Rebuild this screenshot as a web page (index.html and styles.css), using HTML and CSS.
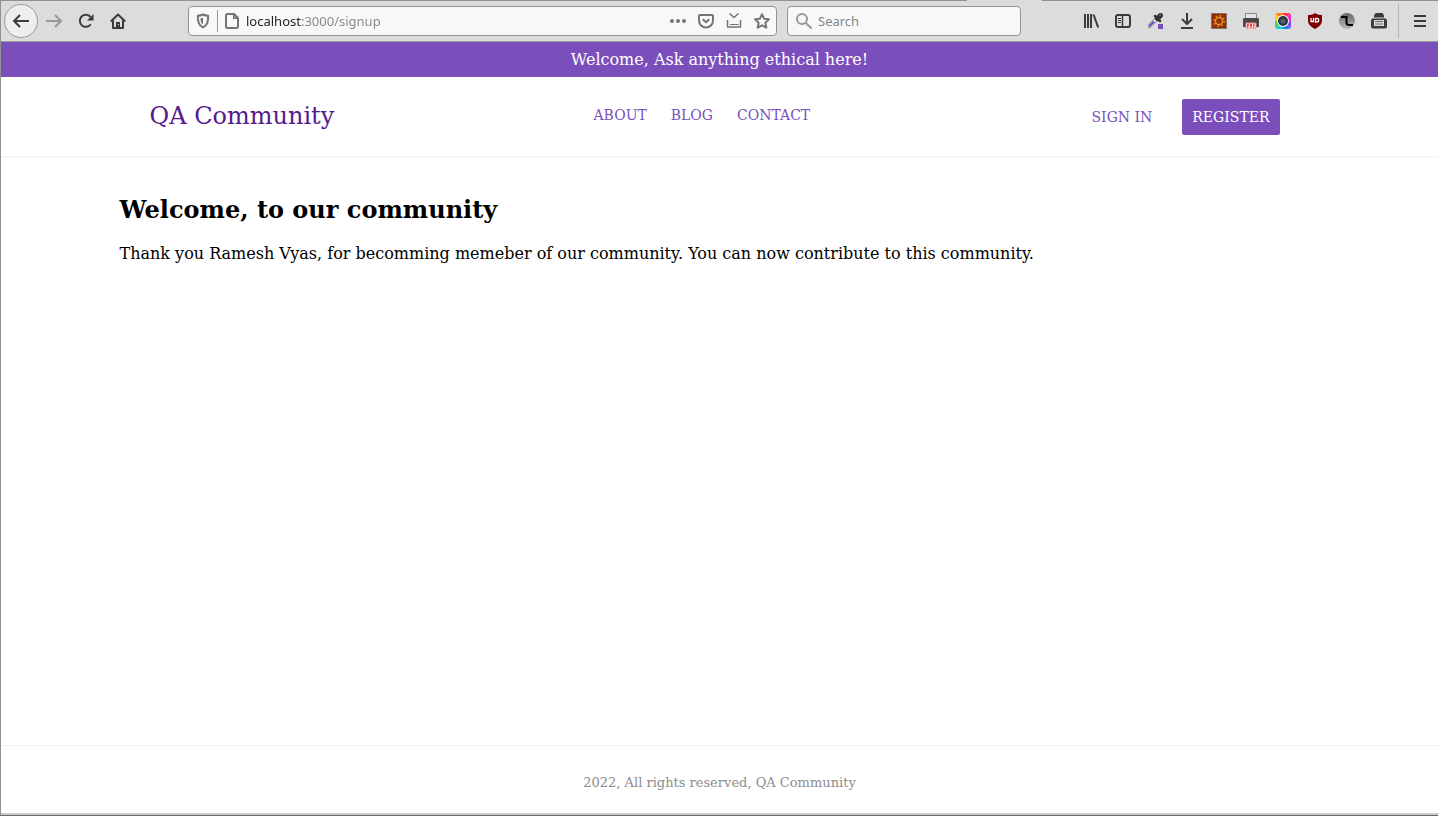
FILE: index.html
```html
<!DOCTYPE html>
<html lang="en">
<head>
<meta charset="utf-8">
<meta name="viewport" content="width=device-width, initial-scale=1">
<title>QA Community</title>
<link rel="stylesheet" href="styles.css">
</head>
<body class="window">
<div class="toolbar">
  <div class="group">
    <button class="back" type="button" aria-label="Back"><svg viewBox="0 0 16 16"><path d="M16 8H1.500M7 2 1 8l6 6" class="line thick"/></svg></button>
    <button class="tool faded" type="button" aria-label="Forward"><svg viewBox="0 0 16 16"><path d="M0 8h14.500M9 2l6 6-6 6" class="line thick"/></svg></button>
    <button class="tool" type="button" aria-label="Reload"><svg viewBox="0 0 16 16"><path d="M12.800 11.200A6 6 0 1 1 12.500 4" class="line thick"/><path d="M15.500 1v6.500H9z"/></svg></button>
    <button class="tool" type="button" aria-label="Home"><svg viewBox="0 0 16 16"><path d="M.8 8.500 8 1.500l7.200 7M3 7.500V15h10V7.500" class="line thick"/><path d="M6 15V9h4v6z"/><path d="M8 11h1v1H8z" fill="#ddd"/></svg></button>
  </div>
  <div class="field address">
    <svg class="shield" viewBox="0 0 16 16"><path d="M8 1.500c2 1 3.500 1.200 5.200 1.300 0 5.700-.7 9.200-5.200 11.700C3.500 12 2.800 8.500 2.800 2.800 4.500 2.700 6 2.500 8 1.500z" class="line thick"/><path d="M8 4.500v7C6 10 5.500 8 5.500 5.200 6.500 5.200 7.300 5 8 4.500z"/></svg>
    <span class="divider"></span>
    <svg class="page-icon" viewBox="0 0 16 16"><path d="M3.500 1H10l4 4v8.500a1.500 1.500 0 0 1-1.500 1.500h-9A1.500 1.500 0 0 1 2 13.500v-11A1.500 1.500 0 0 1 3.500 1z" class="line thick"/><path d="M9 1v5h5z"/><path d="M10.500 3.500v1.200h1.200z" fill="#f8f8f8"/></svg>
    <input class="url" type="text" aria-label="Address" value="localhost:3000/signup">
    <button class="mini" type="button" aria-label="Page actions"><svg viewBox="0 0 16 16"><circle cx="2" cy="8" r="2"/><circle cx="8" cy="8" r="2"/><circle cx="14" cy="8" r="2"/></svg></button>
    <button class="mini" type="button" aria-label="Save to Pocket"><svg viewBox="0 0 16 16"><path d="M2 2h12a1 1 0 0 1 1 1v4.500a7 7 0 0 1-14 0V3a1 1 0 0 1 1-1z" class="line thick"/><path d="m4.800 6.300 3.200 3 3.200-3" class="line thick"/></svg></button>
    <button class="mini" type="button" aria-label="Save page"><svg viewBox="0 0 16 16"><path d="m3.500.5 4.500 4 4.500-4" class="line"/><path d="M1.500 7v7h13V7" class="line"/><path d="M4 11.500h8.500" class="line thin"/></svg></button>
    <button class="mini" type="button" aria-label="Bookmark"><svg viewBox="0 0 16 16"><path d="m8 1.200 2.100 4.500 4.800.6-3.500 3.500.9 4.900L8 12.300l-4.300 2.400.9-4.900L1.100 6.300l4.800-.6z" class="line thick"/></svg></button>
  </div>
  <div class="field search">
    <svg viewBox="0 0 16 16"><circle cx="6" cy="6" r="5" class="line thick"/><path d="m9.700 9.700 6 6" class="line thick"/></svg>
    <input class="query" type="search" aria-label="Search" placeholder="Search">
  </div>
  <div class="group">
    <button class="tool" type="button" aria-label="Library"><svg viewBox="0 0 16 16"><path d="M2 1v14M5 1v14M8 1v14" class="line thick"/><path d="m10.500 1.500 4.700 13" class="line thick"/></svg></button>
    <button class="tool" type="button" aria-label="Sidebars"><svg viewBox="0 0 16 16"><rect x="1" y="2" width="14" height="12" rx="2" class="line thick"/><path d="M7.500 2v12" class="line"/><path d="M3 5.500h3M3 7.500h3M3 9.500h3" class="line thin"/></svg></button>
    <button class="tool" type="button" aria-label="Color picker"><svg viewBox="0 0 16 16"><path d="M9.500 6 2 13.500" stroke="#999" stroke-width="4"/><path d="m2 12-1.500 3.500L4 14z" fill="#888"/><path d="M9.500 6 2.500 13" stroke="#f2eefa" stroke-width="2"/><path d="m7 8.500-4.500 4.500" stroke="#7340e0" stroke-width="2"/><path d="m8 3 5 5" stroke="#333" stroke-width="2.500" stroke-linecap="round"/><path d="m10.500 5.500 3-3" stroke="#333" stroke-width="5" stroke-linecap="round"/><path d="m12.500 2.500 1.500-1" stroke="#999"/><path d="M11 11h5v5h-5z" fill="#7a50bb"/></svg></button>
    <button class="tool" type="button" aria-label="Downloads"><svg viewBox="0 0 16 16"><path d="M8 0v11M3 6l5 5 5-5M2 15h12" class="line thick"/></svg></button>
    <button class="tool" type="button" aria-label="Sun extension"><svg viewBox="0 0 16 16"><path d="M.5.5h15v15H.5z" fill="#942b0a" stroke="#807067"/><circle cx="8" cy="8" r="3.600" fill="none" stroke="#e49b22" stroke-width="1.500"/><circle cx="8" cy="8" r="5.200" fill="none" stroke="#e49b22" stroke-width="1.500" stroke-dasharray="1.500 2.584"/></svg></button>
    <button class="tool" type="button" aria-label="Print to PDF"><svg viewBox="0 0 16 16"><path d="M2.500 5V.5h11V5" fill="#e6e6e6" stroke="#888"/><path d="M1 5h14l1 1v8H0V6z" fill="#484848"/><path d="M3 10h10v5H3z" fill="#fff" stroke="#f08080"/><path d="M4.500 14.500v-3.500h1.300v2H4.500M7.500 11v3h1v-3zM10.500 14.500V11H12M10.500 12.500h1.300" fill="none" stroke="#f04444"/></svg></button>
    <button class="tool" type="button" aria-label="Camera"><svg viewBox="0 0 16 16"><defs><clipPath id="camera-tile"><rect width="16" height="16" rx="3"/></clipPath></defs><g clip-path="url(#camera-tile)"><path d="M8 8 0 0h8z" fill="#f97e19"/><path d="M8 8V0h8z" fill="#ff354f"/><path d="m8 8 8-8v8z" fill="#f32bc4"/><path d="M8 8h8v8z" fill="#8c43f3"/><path d="m8 8 8 8H8z" fill="#257df5"/><path d="M8 8v8H0z" fill="#16c8e9"/><path d="m8 8-8 8V8z" fill="#42d54d"/><path d="M8 8H0V0z" fill="#ffce26"/></g><circle cx="8" cy="8" r="6" fill="#fff"/><circle cx="8" cy="8" r="5" fill="#263443"/><circle cx="8" cy="8" r="2.600" fill="#53606b"/></svg></button>
    <button class="tool" type="button" aria-label="Content blocker"><svg viewBox="0 0 16 16"><path d="M8 0c2 1.500 4 2 7 2v5c0 4-2 6.500-7 9-5-2.500-7-5-7-9V2c3 0 5-.5 7-2z" fill="#800000"/><path d="M4 5v3.500h2.500V5M8.500 5v4h1.800c2 0 2-3.500 0-3.500H8.500" fill="none" stroke="#fff" stroke-width="1.300"/></svg></button>
    <button class="tool" type="button" aria-label="Sphere extension"><svg viewBox="0 0 16 16"><defs><linearGradient id="sphere" x1="0" y1="0" x2="0" y2="1"><stop offset="0" stop-color="#666"/><stop offset="1" stop-color="#bbb"/></linearGradient></defs><circle cx="8" cy="8" r="8" fill="url(#sphere)"/><path d="M2 4h5.500v5.500q0 2.500 2.500 2.500h4" fill="none" stroke="#000" stroke-width="2"/></svg></button>
    <button class="tool" type="button" aria-label="Print"><svg viewBox="0 0 16 16"><path d="M3 4.500V2.500L4.500 0h7L13 2.500v2zM1 5.500h14l1 2v6q0 2-2 2H2q-2 0-2-2v-6z" fill="#3b3b3d"/><path d="M3 7h10v6H3z" fill="#ddd"/><path d="M4 8.500h8M4 11h8" stroke="#666"/></svg></button>
  </div>
  <span class="separator"></span>
  <button class="tool" type="button" aria-label="Open menu"><svg viewBox="0 0 16 16"><path d="M2 3h12M2 8h12M2 13h12" class="line thick"/></svg></button>
</div>

<p class="announcement">Welcome, Ask anything ethical here!</p>
<header class="site-header">
  <div class="container header-row">
    <a class="brand" href="#">QA Community</a>
    <nav class="links" aria-label="Main">
      <a href="#">ABOUT</a>
      <a href="#">BLOG</a>
      <a href="#">CONTACT</a>
    </nav>
    <div class="account">
      <a href="#">SIGN IN</a>
      <a class="register" href="#">REGISTER</a>
    </div>
  </div>
</header>
<main class="container content">
  <h1 class="title">Welcome, to our community</h1>
  <p class="message">Thank you Ramesh Vyas, for becomming memeber of our community. You can now contribute to this community.</p>
</main>
<footer class="site-footer">2022, All rights reserved, QA Community</footer>
</body>
</html>
```
FILE: styles.css
```css
* {
  box-sizing: border-box;
}

.window {
  display: flex;
  flex-direction: column;
  min-height: 100vh;
  margin: 0;
  border-left: 1px solid #929292;
  border-bottom: 1px solid #666;
  background: #fff;
  color: #000;
  font-family: "DejaVu Serif", serif;
  font-size: 16px;
}

/* Browser toolbar; the top line breaks under the active tab */
.toolbar {
  display: flex;
  align-items: center;
  height: 42px;
  padding: 1px 2px 0 3px;
  border-bottom: 1px solid #999;
  background: linear-gradient(90deg, #919191 966px, #dcdcdc 966px 1041px, #919191 1041px) top / 100% 1px no-repeat #dcdcdc;
  color: #3b3b3d;
  font-family: "Noto Sans", sans-serif;
  font-size: 13px;
}

.toolbar svg {
  flex: none;
  display: block;
  width: 16px;
  height: 16px;
  fill: currentColor;
}

.toolbar .line {
  fill: none;
  stroke: currentColor;
  stroke-width: 1.5;
  stroke-linejoin: round;
}

.toolbar .thick {
  stroke-width: 2;
}

.toolbar .thin {
  stroke-width: 1;
}

.group {
  display: flex;
  align-items: center;
}

.toolbar button {
  flex: none;
  display: flex;
  align-items: center;
  justify-content: center;
  padding: 0;
  border: 0;
  background: none;
  color: inherit;
}

.toolbar .tool {
  width: 32px;
  height: 32px;
}

.toolbar .faded {
  color: #999;
}

.toolbar .back {
  width: 34px;
  height: 34px;
  border: 1px solid #999;
  border-radius: 50%;
  background: #eee;
}

.field {
  display: flex;
  align-items: center;
  height: 30px;
  border: 1px solid #939393;
  border-radius: 4px;
  background: #f8f8f8;
  color: #747474;
}

.field input {
  flex: 1;
  min-width: 0;
  padding: 0;
  border: 0;
  outline: 0;
  background: none;
  font: inherit;
}

.address {
  flex: 1;
  margin: 0 10px 0 54px;
  padding: 0 0 0 6px;
}

.divider {
  width: 1px;
  height: 22px;
  margin: 0 6px;
  background: #999;
}

.page-icon {
  margin-right: 6px;
}

/* Host part is darker than the port and path */
.field .url {
  background: linear-gradient(90deg, #202020 55px, #858585 55px);
  background-clip: text;
  color: #202020;
  -webkit-text-fill-color: transparent;
}

.toolbar .mini {
  width: 28px;
  height: 28px;
}

.search {
  width: 234px;
  margin-right: 54px;
  padding: 0 8px;
  gap: 6px;
  color: #999;
}

.query::placeholder {
  color: #858585;
}

.separator {
  width: 1px;
  height: 34px;
  margin: 0 5px 0 3px;
  background: #b5b5b5;
}

.announcement {
  margin: 0;
  padding: 8px 0;
  background: #7a4fbb;
  color: #fff;
  line-height: 19px;
  text-align: center;
}

.container {
  width: 100%;
  max-width: 1200px;
  margin: 0 auto;
}

.site-header {
  border-bottom: 1px solid #f1f1f1;
  box-shadow: 0 1px 1px #fafafa;
}

.header-row {
  display: grid;
  grid-template-columns: 444fr 343fr 343fr;
  align-items: start;
  padding: 22px 40px 21px 30px;
  font-size: 14px;
}

.header-row a {
  color: #7a4fbb;
  text-decoration: none;
}

.header-row .brand {
  color: #551a8b;
  font-size: 24px;
  line-height: 34px;
}

.links {
  display: flex;
  gap: 24px;
  line-height: 32px;
}

.account {
  display: flex;
  align-items: center;
  justify-content: flex-end;
  gap: 30px;
}

.header-row .register {
  padding: 10px;
  border-radius: 2px;
  background: #7a4fbb;
  color: #fff;
  line-height: 16px;
}

.content {
  flex: 1;
  padding: 39px 0;
}

.title {
  margin: 0;
  font-size: 24px;
  line-height: 28px;
}

.message {
  margin: 20px 0 0;
  line-height: 19px;
}

.site-footer {
  padding: 29px 0 23px;
  border-top: 1px solid #f1f1f1;
  border-bottom: 2px solid #ccc;
  color: #8c8c8c;
  font-size: 13px;
  line-height: 15px;
  text-align: center;
}
```
